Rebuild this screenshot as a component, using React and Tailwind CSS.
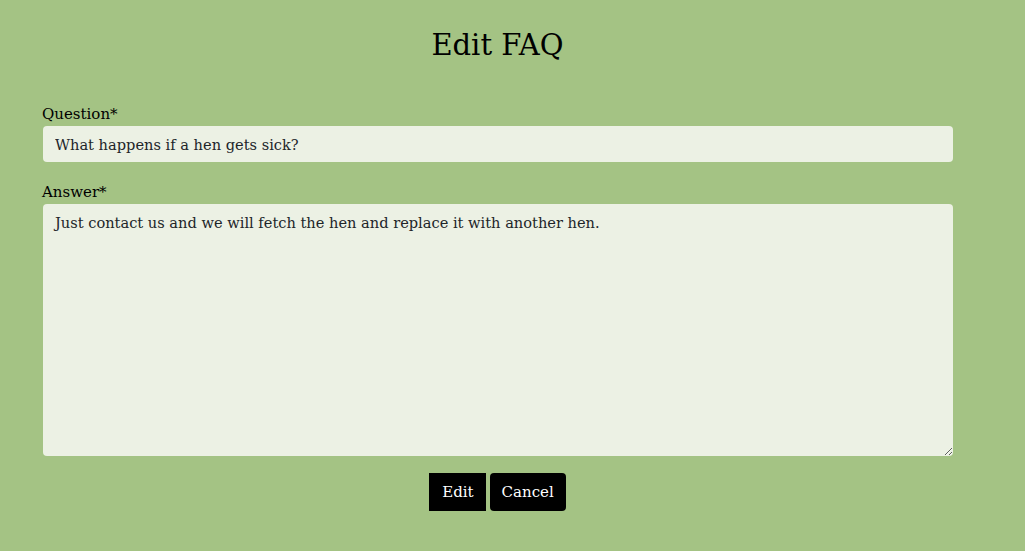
export default function App() {
  return (
    <div className="min-h-[551px] w-full bg-[#a4c384] text-black" style={{ fontFamily: '"DejaVu Serif", "Liberation Serif", serif' }}>
      <div className="w-[911px] ml-[42px] pt-[26px]">
        <h1 className="text-center text-[29px] leading-[38px] mb-[40px]">Edit FAQ</h1>
        <label className="block text-[15px] leading-[20px] mb-[2px]">Question*</label>
        <input
          className="block w-[910px] ml-[1px] h-[36px] rounded-[4px] bg-[#ecf1e4] px-[12px] text-[14.6px] text-[#212529] outline-none"
          defaultValue="What happens if a hen gets sick?"
          style={{ fontFamily: 'inherit' }}
        />
        <label className="block text-[15px] leading-[20px] mt-[20px] mb-[2px]">Answer*</label>
        <textarea
          className="block w-[910px] ml-[1px] h-[252px] rounded-[4px] bg-[#ecf1e4] px-[12px] py-[8px] text-[14.6px] leading-[22px] text-[#212529] outline-none"
          defaultValue="Just contact us and we will fetch the hen and replace it with another hen."
          style={{ fontFamily: 'inherit' }}
        />
        <div className="flex justify-center gap-[4px] mt-[17px]">
          <button className="h-[38px] pl-[13px] pr-[12px] bg-black text-white text-[15px]" style={{ fontFamily: 'inherit' }}>Edit</button>
          <button className="h-[38px] pl-[12px] pr-[12px] bg-black text-white text-[15px] rounded-[4px]" style={{ fontFamily: 'inherit' }}>Cancel</button>
        </div>
      </div>
    </div>
  );
}
